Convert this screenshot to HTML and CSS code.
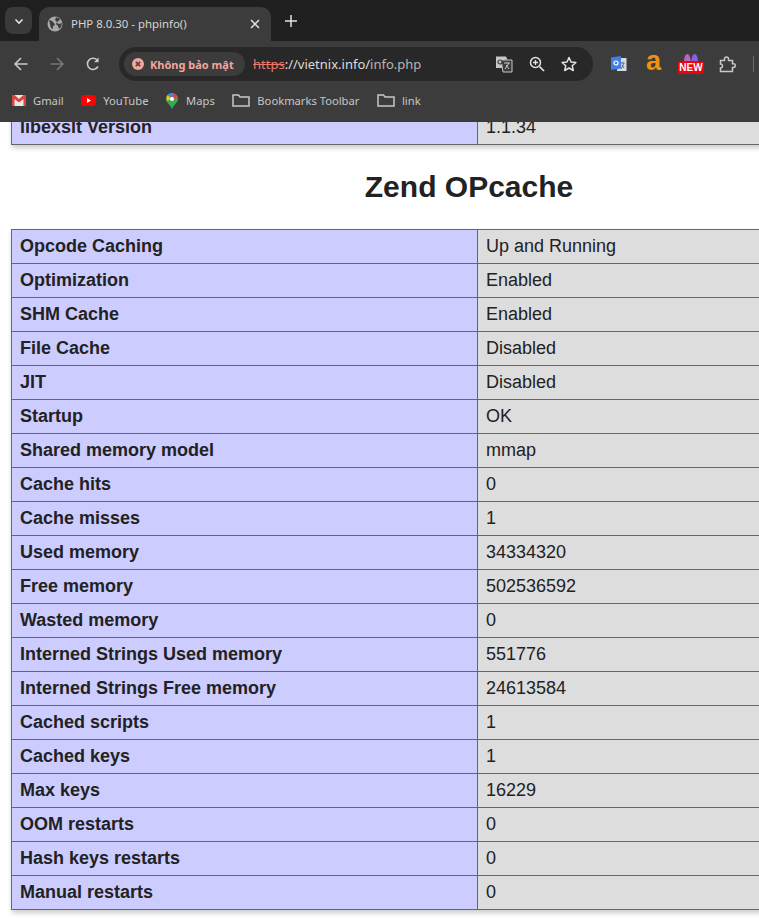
FILE: index.html
```html
<!DOCTYPE html>
<html>
<head>
  <meta charset="UTF-8">
  <title>PHP 8.0.30 - phpinfo()</title>
  <link rel="stylesheet" href="styles.css">
</head>
<body>
  <div class="tabstrip">
    <div class="tab-search">
      <svg width="12" height="12" viewBox="0 0 12 12"><path d="M2.5 4.5 6 8l3.5-3.5" fill="none" stroke="#e3e3e3" stroke-width="1.6"/></svg>
    </div>
    <div class="tab">
      <svg class="globe" width="16" height="16" viewBox="0 0 16 16">
        <circle cx="8" cy="8" r="7.5" fill="#a8a8a8"/>
        <path d="M2 4l3 1 2 2 1 2-2 1v3l-2-1-1-4zM9 1.5l3 .5 1 2-2 1-1 2 2 1 3-1-1 4-2 2-1-3-2-2 1-2-2-2z" fill="#3c3c3c"/>
      </svg>
      <span class="tab-title">PHP 8.0.30 - phpinfo()</span>
      <svg width="10" height="10" viewBox="0 0 10 10"><path d="M1 1l8 8M9 1l-8 8" stroke="#e3e3e3" stroke-width="1.5"/></svg>
    </div>
    <svg class="new-tab" width="12" height="12" viewBox="0 0 12 12"><path d="M6 0v12M0 6h12" stroke="#e3e3e3" stroke-width="1.5"/></svg>
  </div>

  <div class="toolbar">
    <div class="nav-btn">
      <svg width="16" height="16" viewBox="0 0 16 16"><path d="M14.5 8H2M8 2 2 8l6 6" fill="none" stroke="#c7c7c7" stroke-width="1.6"/></svg>
    </div>
    <div class="nav-btn">
      <svg width="16" height="16" viewBox="0 0 16 16"><path d="M1.5 8H14M8 2l6 6-6 6" fill="none" stroke="#777" stroke-width="1.6"/></svg>
    </div>
    <div class="nav-btn">
      <svg width="16" height="16" viewBox="0 0 16 16"><path d="M13 10.5A5.6 5.6 0 1 1 12.6 4.6" fill="none" stroke="#c7c7c7" stroke-width="1.6"/><path d="M13.6 1.6v4.6H9z" fill="#c7c7c7"/></svg>
    </div>
    <div class="omnibox">
      <div class="chip">
        <svg width="12" height="12" viewBox="0 0 12 12"><circle cx="6" cy="6" r="6" fill="#f2a69c"/><path d="M3.8 3.8l4.4 4.4M8.2 3.8 3.8 8.2" stroke="#3c3c3c" stroke-width="1.5"/></svg>
        <span>Không bảo mật</span>
      </div>
      <div class="url"><span class="scheme">https</span><span class="host">://vietnix.info/</span><span class="path">info.php</span></div>
      <div class="omni-icons">
        <svg width="18" height="18" viewBox="0 0 18 18">
          <path d="M1 1.5h10l1.500 3H1z M1 1.500h9V13H1z" fill="#c7c7c7"/>
          <path d="M6 5h11v12H8z" fill="#3c3c3c" stroke="#c7c7c7"/>
          <path d="M9 8h6M12 7v1M10 14l4-6M11 10l3 4" stroke="#c7c7c7" fill="none"/>
          <circle cx="5" cy="7" r="2" fill="none" stroke="#3c3c3c" stroke-width="1.200"/>
        </svg>
        <svg width="16" height="16" viewBox="0 0 16 16"><circle cx="6.500" cy="6.500" r="5" fill="none" stroke="#e3e3e3" stroke-width="1.500"/><path d="M10.500 10.500 15 15" stroke="#e3e3e3" stroke-width="1.700"/><path d="M6.500 4v5M4 6.500h5" stroke="#e3e3e3" stroke-width="1.300"/></svg>
        <svg width="16" height="16" viewBox="0 0 16 16"><path d="M8 1.500l2 4.500 4.900.5-3.700 3.200 1.100 4.800L8 12l-4.300 2.500 1.100-4.800L1.100 6.500 6 6z" fill="none" stroke="#e3e3e3" stroke-width="1.500" stroke-linejoin="round"/></svg>
      </div>
    </div>
    <div class="ext-icons">
      <svg width="17" height="16" viewBox="0 0 17 16">
        <path d="M7 2h9.500v13H7z" fill="#d5dbe6"/>
        <path d="M10.500 7h4M12.500 6v1M11 13l3-6M12 9l2 3" stroke="#667" fill="none"/>
        <path d="M1 1.500 11 0v12.500L1 14z" fill="#3f7fe6"/>
        <circle cx="6" cy="7" r="2" fill="none" stroke="#fff" stroke-width="1.200"/>
      </svg>
      <span class="ext-amazon">a</span>
      <div class="ext-new">
        <svg width="14" height="8" viewBox="0 0 14 8"><path d="M0 8C0 3 1.500 0 3.300 0S6.600 3 6.800 8z" fill="#c060c0"/><path d="M7.200 8c.2-5 1.700-8 3.500-8S14 3 14 8z" fill="#8a60e0"/></svg>
        <span class="new-badge">NEW</span>
      </div>
      <svg class="ext-puzzle" width="17" height="17" viewBox="0 0 17 17"><path d="M1.500 4.500h4V3a2 2 0 0 1 4 0v1.500h4v3.300h1a1.800 1.800 0 0 1 0 3.600h-1v4h-12v-3.400a2 2 0 0 0 0-4z" fill="none" stroke="#c7c7c7" stroke-width="1.500"/></svg>
      <div class="toolbar-divider"></div>
    </div>
  </div>

  <div class="bookmarks">
    <div class="bookmark">
      <svg width="14" height="11" viewBox="0 0 14 11"><path d="M0 0h14v11H0z" fill="#e8e8e8"/><path d="M0 0h2.500L7 4l4.500-4H14v11h-2.500V4L7 7.500 2.500 4v7H0z" fill="#d9463c"/></svg>
      <span>Gmail</span>
    </div>
    <div class="bookmark">
      <svg width="15" height="11" viewBox="0 0 15 11"><rect width="15" height="11" rx="3" fill="#f00"/><path d="M6 3v5l4-2.500z" fill="#fff"/></svg>
      <span>YouTube</span>
    </div>
    <div class="bookmark">
      <svg width="13" height="16" viewBox="0 0 13 16">
        <path d="M6 0a6 6 0 0 1 6 6c0 3.500-4 5.500-6 10-2-4.500-6-6.500-6-10a6 6 0 0 1 6-6z" fill="#34a853"/>
        <path d="M1.500 2 6 6 1 8a6 6 0 0 1 .5-6z" fill="#fbbc04"/>
        <path d="M1.500 2A6 6 0 0 1 6 0l1.500.5L6 6z" fill="#4285f4"/>
        <path d="M7.500.2A6 6 0 0 1 12 5L6 6z" fill="#ea4335"/>
        <circle cx="6" cy="6" r="2" fill="#fff"/>
      </svg>
      <span>Maps</span>
    </div>
    <div class="bookmark">
      <svg width="18" height="13" viewBox="0 0 18 13"><path d="M1 1h5.500L8 3h9v9H1z" fill="none" stroke="#c7c7c7" stroke-width="1.500"/></svg>
      <span>Bookmarks Toolbar</span>
    </div>
    <div class="bookmark">
      <svg width="18" height="13" viewBox="0 0 18 13"><path d="M1 1h5.500L8 3h9v9H1z" fill="none" stroke="#c7c7c7" stroke-width="1.500"/></svg>
      <span>link</span>
    </div>
  </div>

  <div class="page">
    <table class="info info-top">
      <tr><td class="e">libexslt Version</td><td class="v">1.1.34</td></tr>
    </table>

    <h2>Zend OPcache</h2>

    <table class="info">
      <tr><td class="e">Opcode Caching</td><td class="v">Up and Running</td></tr>
      <tr><td class="e">Optimization</td><td class="v">Enabled</td></tr>
      <tr><td class="e">SHM Cache</td><td class="v">Enabled</td></tr>
      <tr><td class="e">File Cache</td><td class="v">Disabled</td></tr>
      <tr><td class="e">JIT</td><td class="v">Disabled</td></tr>
      <tr><td class="e">Startup</td><td class="v">OK</td></tr>
      <tr><td class="e">Shared memory model</td><td class="v">mmap</td></tr>
      <tr><td class="e">Cache hits</td><td class="v">0</td></tr>
      <tr><td class="e">Cache misses</td><td class="v">1</td></tr>
      <tr><td class="e">Used memory</td><td class="v">34334320</td></tr>
      <tr><td class="e">Free memory</td><td class="v">502536592</td></tr>
      <tr><td class="e">Wasted memory</td><td class="v">0</td></tr>
      <tr><td class="e">Interned Strings Used memory</td><td class="v">551776</td></tr>
      <tr><td class="e">Interned Strings Free memory</td><td class="v">24613584</td></tr>
      <tr><td class="e">Cached scripts</td><td class="v">1</td></tr>
      <tr><td class="e">Cached keys</td><td class="v">1</td></tr>
      <tr><td class="e">Max keys</td><td class="v">16229</td></tr>
      <tr><td class="e">OOM restarts</td><td class="v">0</td></tr>
      <tr><td class="e">Hash keys restarts</td><td class="v">0</td></tr>
      <tr><td class="e">Manual restarts</td><td class="v">0</td></tr>
    </table>
  </div>
</body>
</html>
```

FILE: styles.css
```css
html, body {
  height: 100%;
}

body {
  margin: 0;
  overflow: hidden;
  display: flex;
  flex-direction: column;
  background: #fff;
  font-family: "Liberation Sans", Arial, sans-serif;
  color: #222;
}

/* browser chrome */
.tabstrip {
  height: 41px;
  flex: none;
  display: flex;
  align-items: flex-end;
  padding-left: 5px;
  background: #1f1f1f;
  box-sizing: border-box;
}

.tab-search {
  width: 27px;
  height: 27px;
  margin-bottom: 7px;
  border-radius: 8px;
  background: #3a3a3a;
  display: flex;
  align-items: center;
  justify-content: center;
}

.tab {
  width: 232px;
  height: 34px;
  margin-left: 7px;
  padding: 0 11px 0 8px;
  box-sizing: border-box;
  border-radius: 10px 10px 0 0;
  background: #3c3c3c;
  display: flex;
  align-items: center;
}

.tab-title {
  flex: 1;
  margin-left: 8px;
  font: 11.400px "Noto Sans", sans-serif;
  color: #d6d6d6;
  margin-top: -1px;
}

.new-tab {
  margin: 0 0 14px 14px;
}

.toolbar {
  height: 41px;
  flex: none;
  display: flex;
  align-items: flex-start;
  padding: 6px 0 0 3px;
  box-sizing: border-box;
  background: #3c3c3c;
}

.nav-btn {
  width: 36px;
  height: 34px;
  display: flex;
  align-items: center;
  justify-content: center;
}

.omnibox {
  width: 474px;
  height: 34px;
  margin-left: 8px;
  padding: 0 16px 0 5px;
  box-sizing: border-box;
  border-radius: 17px;
  background: #282828;
  display: flex;
  align-items: center;
}

.chip {
  width: 121px;
  height: 24px;
  padding-left: 8px;
  box-sizing: border-box;
  border-radius: 12px;
  background: #3c3c3c;
  display: flex;
  align-items: center;
  gap: 6px;
  font: bold 11px "Noto Sans", sans-serif;
  color: #f2a69c;
}

.url {
  flex: 1;
  margin-left: 8px;
  font: 13px "Noto Sans", sans-serif;
}

.scheme {
  color: #e8776a;
  text-decoration: line-through;
}

.host {
  color: #dcdcdc;
}

.path {
  color: #b5b5b5;
}

.omni-icons {
  display: flex;
  align-items: center;
  gap: 16px;
}

.ext-icons {
  display: flex;
  align-items: center;
  height: 34px;
  margin-left: 17px;
  gap: 18px;
}

.ext-amazon {
  width: 17px;
  font: bold 27px "Liberation Sans", sans-serif;
  line-height: 24px;
  margin-top: -6px;
  text-align: center;
  color: #f0920f;
}

.ext-new {
  width: 26px;
  display: flex;
  flex-direction: column;
  align-items: center;
  margin-left: -2px;
}

.new-badge {
  display: block;
  width: 26px;
  height: 13px;
  margin-top: -1px;
  border-radius: 3px;
  background: #f00008;
  color: #fff;
  font: bold 10px/13px "Liberation Sans", sans-serif;
  text-align: center;
}

.ext-puzzle {
  margin-left: -3px;
}

.toolbar-divider {
  width: 1px;
  height: 16px;
  margin-left: -1px;
  background: #6a6a6a;
}

.bookmarks {
  height: 40px;
  flex: none;
  display: flex;
  align-items: center;
  gap: 17.600px;
  padding: 0 0 3px 12px;
  box-sizing: border-box;
  background: #3c3c3c;
}

.bookmark {
  display: flex;
  align-items: center;
  gap: 7px;
  font: 11.200px "Noto Sans", sans-serif;
  color: #c7c7c7;
}

/* phpinfo content */
.page {
  flex: 1;
  min-height: 0;
  overflow: hidden;
  padding-left: 11px;
}

.info {
  width: 916px;
  table-layout: fixed;
  border-collapse: collapse;
  box-shadow: 1px 3px 5px #ccc;
  font-size: 18px;
}

.info-top {
  margin-top: -12px;
}

.info td {
  height: 33px;
  padding: 0 8px;
  border: 1px solid #666;
  box-sizing: content-box;
  vertical-align: middle;
}

.e {
  width: 449px;
  background: #ccf;
  font-weight: bold;
}

.v {
  background: #ddd;
}

h2 {
  width: 916px;
  margin: 24px 0 24px;
  font-size: 30px;
  line-height: 36px;
  text-align: center;
}
```
